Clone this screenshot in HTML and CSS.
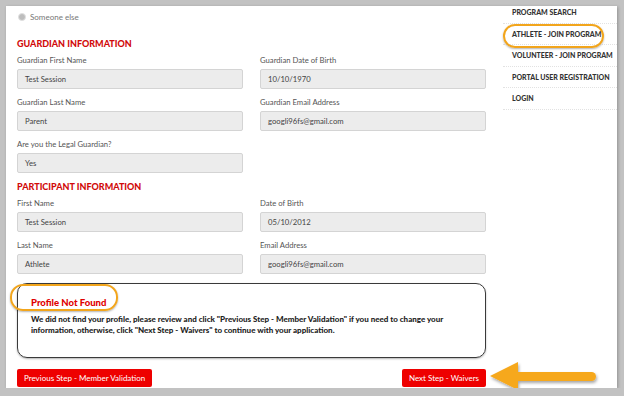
FILE: index.html
```html
<!DOCTYPE html>
<html lang="en">

<head>
    <meta charset="UTF-8">
    <meta name="viewport" content="width=device-width, initial-scale=1.0">
    <title>Join Program</title>
    <link rel="stylesheet" href="styles.css">
</head>

<body>
    <div class="frame">
        <div class="main">
            <div class="radio-row"><span class="radio"></span>Someone else</div>

            <h2>Guardian Information</h2>
            <div class="row">
                <div class="form-group"><label>Guardian First Name</label><div class="field">Test Session</div></div>
                <div class="form-group"><label>Guardian Date of Birth</label><div class="field">10/10/1970</div></div>
            </div>
            <div class="row">
                <div class="form-group"><label>Guardian Last Name</label><div class="field">Parent</div></div>
                <div class="form-group"><label>Guardian Email Address</label><div class="field">googli96fs@gmail.com</div></div>
            </div>
            <div class="row">
                <div class="form-group"><label>Are you the Legal Guardian?</label><div class="field">Yes</div></div>
            </div>

            <h2>Participant Information</h2>
            <div class="row">
                <div class="form-group"><label>First Name</label><div class="field">Test Session</div></div>
                <div class="form-group"><label>Date of Birth</label><div class="field">05/10/2012</div></div>
            </div>
            <div class="row">
                <div class="form-group"><label>Last Name</label><div class="field">Athlete</div></div>
                <div class="form-group"><label>Email Address</label><div class="field">googli96fs@gmail.com</div></div>
            </div>

            <div class="notice">
                <div class="notice-title">Profile Not Found</div>
                <p>We did not find your profile, please review and click "Previous Step - Member Validation" if you need to change your information, otherwise, click "Next Step - Waivers" to continue with your application.</p>
                <span class="highlight highlight-title"></span>
            </div>

            <div class="buttons">
                <button>Previous Step - Member Validation</button>
                <button>Next Step - Waivers</button>
            </div>
        </div>

        <ul class="side-menu">
            <li>Program Search</li>
            <li class="current">Athlete - Join Program<span class="highlight highlight-menu"></span></li>
            <li>Volunteer - Join Program</li>
            <li>Portal User Registration</li>
            <li>Login</li>
        </ul>

        <svg class="arrow" width="120" height="36" viewBox="0 0 120 36">
            <defs>
                <filter id="shade" x="-10%" y="-20%" width="130%" height="160%">
                    <feDropShadow dx="1" dy="2" stdDeviation="1.5" flood-color="#000" flood-opacity="0.35"/>
                </filter>
            </defs>
            <g filter="url(#shade)" fill="#f6a81c">
                <path d="M2 17 L30 3 L30 31 Z"/>
                <rect x="26" y="13" width="82" height="9" rx="4.5"/>
            </g>
        </svg>
    </div>
</body>

</html>
```

FILE: styles.css
```css
* {
    margin: 0;
    padding: 0;
    box-sizing: border-box;
}

body {
    font-family: Lato, "Open Sans", sans-serif;
    background-color: #c2c2c2;
    color: #444;
}

.frame {
    position: relative;
    margin: 6px 7px 0 6px;
    height: 382px;
    background: white;
    display: flex;
    overflow: hidden;
    box-shadow: 1px 1px 3px rgba(0, 0, 0, 0.25);
}

.main {
    width: 497px;
    padding: 5px 0 0 11px;
}

.radio-row {
    display: flex;
    align-items: center;
    height: 12px;
    font-size: 8px;
    color: #777;
}

.radio {
    width: 8px;
    height: 8px;
    margin: 0 4px 0 1px;
    border-radius: 50%;
    background: #bdbdbd;
    border: 1px solid #e0e0e0;
}

h2 {
    height: 14px;
    line-height: 14px;
    margin-top: 14px;
    margin-bottom: 3px;
    font-size: 9px;
    font-weight: 900;
    text-transform: uppercase;
    color: #d10a0a;
}

.row + h2 {
    margin-top: 0;
}

.row {
    display: flex;
    gap: 17px;
}

.form-group {
    width: 226px;
    margin-bottom: 7px;
}

label {
    display: block;
    height: 12px;
    line-height: 12px;
    margin-bottom: 3px;
    font-size: 7.7px;
    color: #555;
}

.field {
    height: 20px;
    line-height: 18px;
    padding: 0 7px;
    font-size: 7.7px;
    color: #444;
    background: #ececec;
    border: 1px solid #d4d4d4;
    border-radius: 2px;
}

.notice {
    position: relative;
    width: 469px;
    height: 75px;
    margin-top: 2px;
    padding: 11px 13px 0;
    border: 1.5px solid #3a3a3a;
    border-radius: 10px;
    box-shadow: 0 1px 2px rgba(0, 0, 0, 0.3);
}

.notice-title {
    height: 15px;
    line-height: 15px;
    font-size: 9.5px;
    font-weight: 900;
    color: #e00000;
}

.notice p {
    margin-top: 4px;
    font-size: 8px;
    line-height: 11px;
    font-weight: 900;
    color: #222;
}

.highlight {
    position: absolute;
    border: 2px solid #f2a51c;
    border-radius: 13px;
    box-shadow: 0 1px 2px rgba(0, 0, 0, 0.3);
}

.highlight-title {
    left: -8.5px;
    top: -0.5px;
    width: 108px;
    height: 27px;
}

.buttons {
    display: flex;
    justify-content: space-between;
    width: 469px;
    margin-top: 11px;
}

button {
    height: 18px;
    padding: 0 7px;
    font-family: Lato, "Open Sans", sans-serif;
    font-size: 8px;
    color: white;
    background-color: #ee0000;
    border: none;
    border-radius: 2px;
}

.side-menu {
    list-style: none;
    width: 114px;
    margin-top: -4px;
}

.side-menu li {
    position: relative;
    height: 21.5px;
    line-height: 21px;
    padding-left: 9px;
    font-size: 7px;
    font-weight: 900;
    text-transform: uppercase;
    color: #333;
    white-space: nowrap;
    border-bottom: 1px dotted #e2e2e2;
}

.highlight-menu {
    left: 0;
    top: 0;
    width: 101px;
    height: 24px;
}

.arrow {
    position: absolute;
    left: 482px;
    top: 353px;
}
```
